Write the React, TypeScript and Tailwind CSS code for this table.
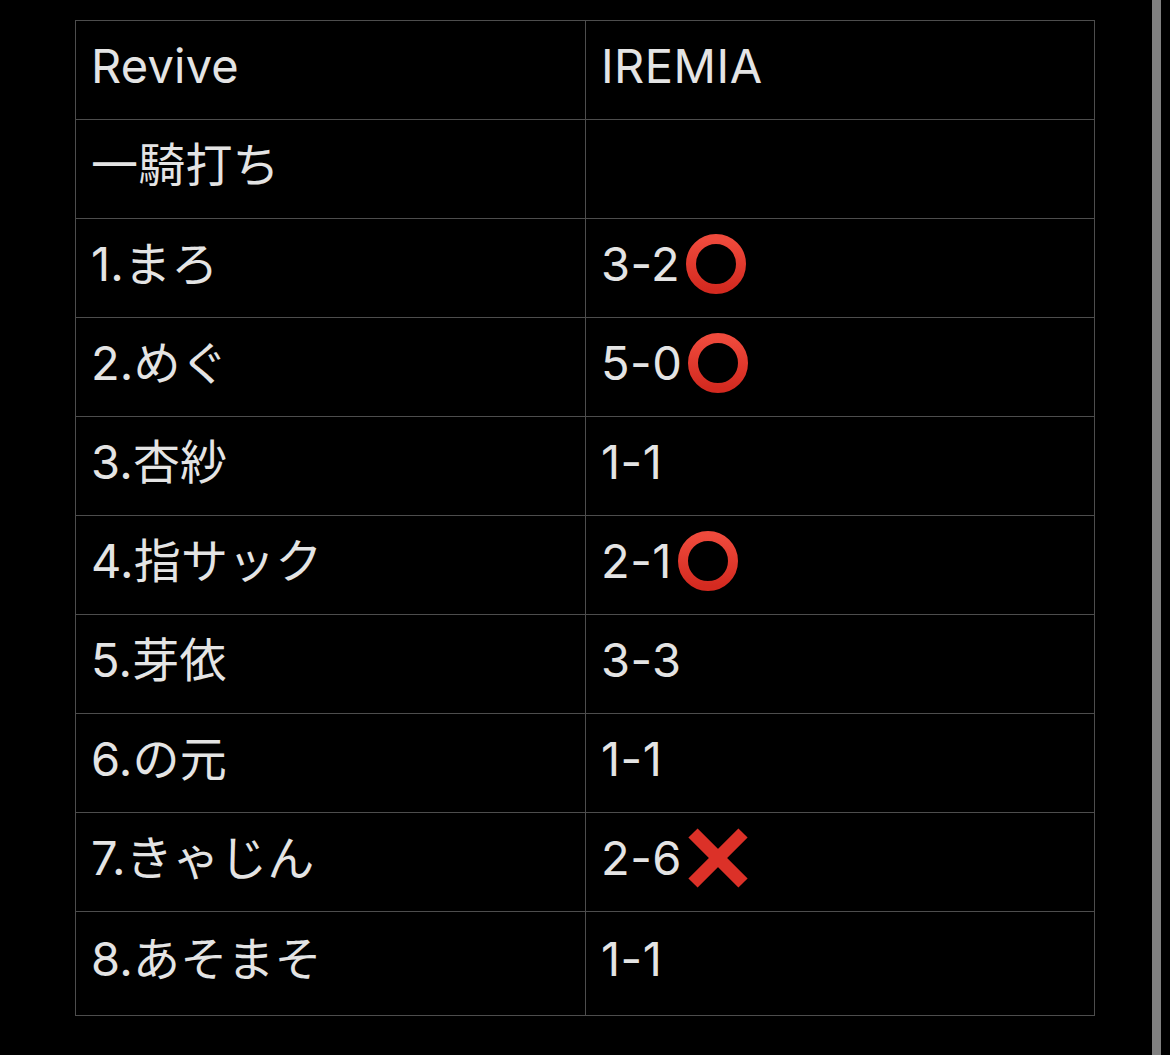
import React from "react";

type Row = { left: string; score?: string; mark?: "win" | "lose" };

const rows: Row[] = [
    { left: "Revive", score: "IREMIA" },
    { left: "一騎打ち" },
    { left: "1.まろ", score: "3-2", mark: "win" },
    { left: "2.めぐ", score: "5-0", mark: "win" },
    { left: "3.杏紗", score: "1-1" },
    { left: "4.指サック", score: "2-1", mark: "win" },
    { left: "5.芽依", score: "3-3" },
    { left: "6.の元", score: "1-1" },
    { left: "7.きゃじん", score: "2-6", mark: "lose" },
    { left: "8.あそまそ", score: "1-1" },
];

function CircleMark() {
    return (
        <svg width="60" height="60" viewBox="0 0 60 60" className="ml-[6px] shrink-0">
            <defs>
                <linearGradient id="ring" x1="0" y1="0" x2="0" y2="1">
                    <stop offset="0" stopColor="#ef4a3c" />
                    <stop offset="1" stopColor="#d42a20" />
                </linearGradient>
            </defs>
            <circle cx="30" cy="30" r="25" fill="none" stroke="url(#ring)" strokeWidth="10" />
        </svg>
    );
}

function CrossMark() {
    return (
        <svg width="60" height="60" viewBox="0 0 60 60" className="ml-[6px] shrink-0">
            <g stroke="#dc3128" strokeWidth="13" strokeLinecap="butt">
                <line x1="5" y1="5" x2="55" y2="55" />
                <line x1="55" y1="5" x2="5" y2="55" />
            </g>
        </svg>
    );
}

export default function App() {
    return (
        <div className="w-[1170px] h-[1055px] bg-black flex overflow-hidden font-['Inter','Noto_Sans_CJK_JP',sans-serif] text-[#e4e4e4]">
            <div className="ml-[75px] mt-[20px] w-[1020px] self-start border border-[#4d4d4d]">
                {rows.map((row, i) => (
                    <div
                        key={i}
                        className={`grid grid-cols-[510px_1fr] ${i === rows.length - 1 ? "h-[103px]" : "h-[99px] border-b border-[#4d4d4d]"}`}
                    >
                        <div className="border-r border-[#4d4d4d] px-[15px] flex items-center pb-[9px]">
                            <span className="text-[47px] leading-[56px] tracking-[0.2px]">{row.left}</span>
                        </div>
                        <div className="px-[15px] flex items-center pb-[9px]">
                            {row.score && <span className="text-[47px] leading-[56px] tracking-[0.5px]">{row.score}</span>}
                            {row.mark === "win" && <CircleMark />}
                            {row.mark === "lose" && <CrossMark />}
                        </div>
                    </div>
                ))}
            </div>
            <div className="ml-auto mr-[9px] w-[9px] h-full bg-[#808080]" />
        </div>
    );
}
